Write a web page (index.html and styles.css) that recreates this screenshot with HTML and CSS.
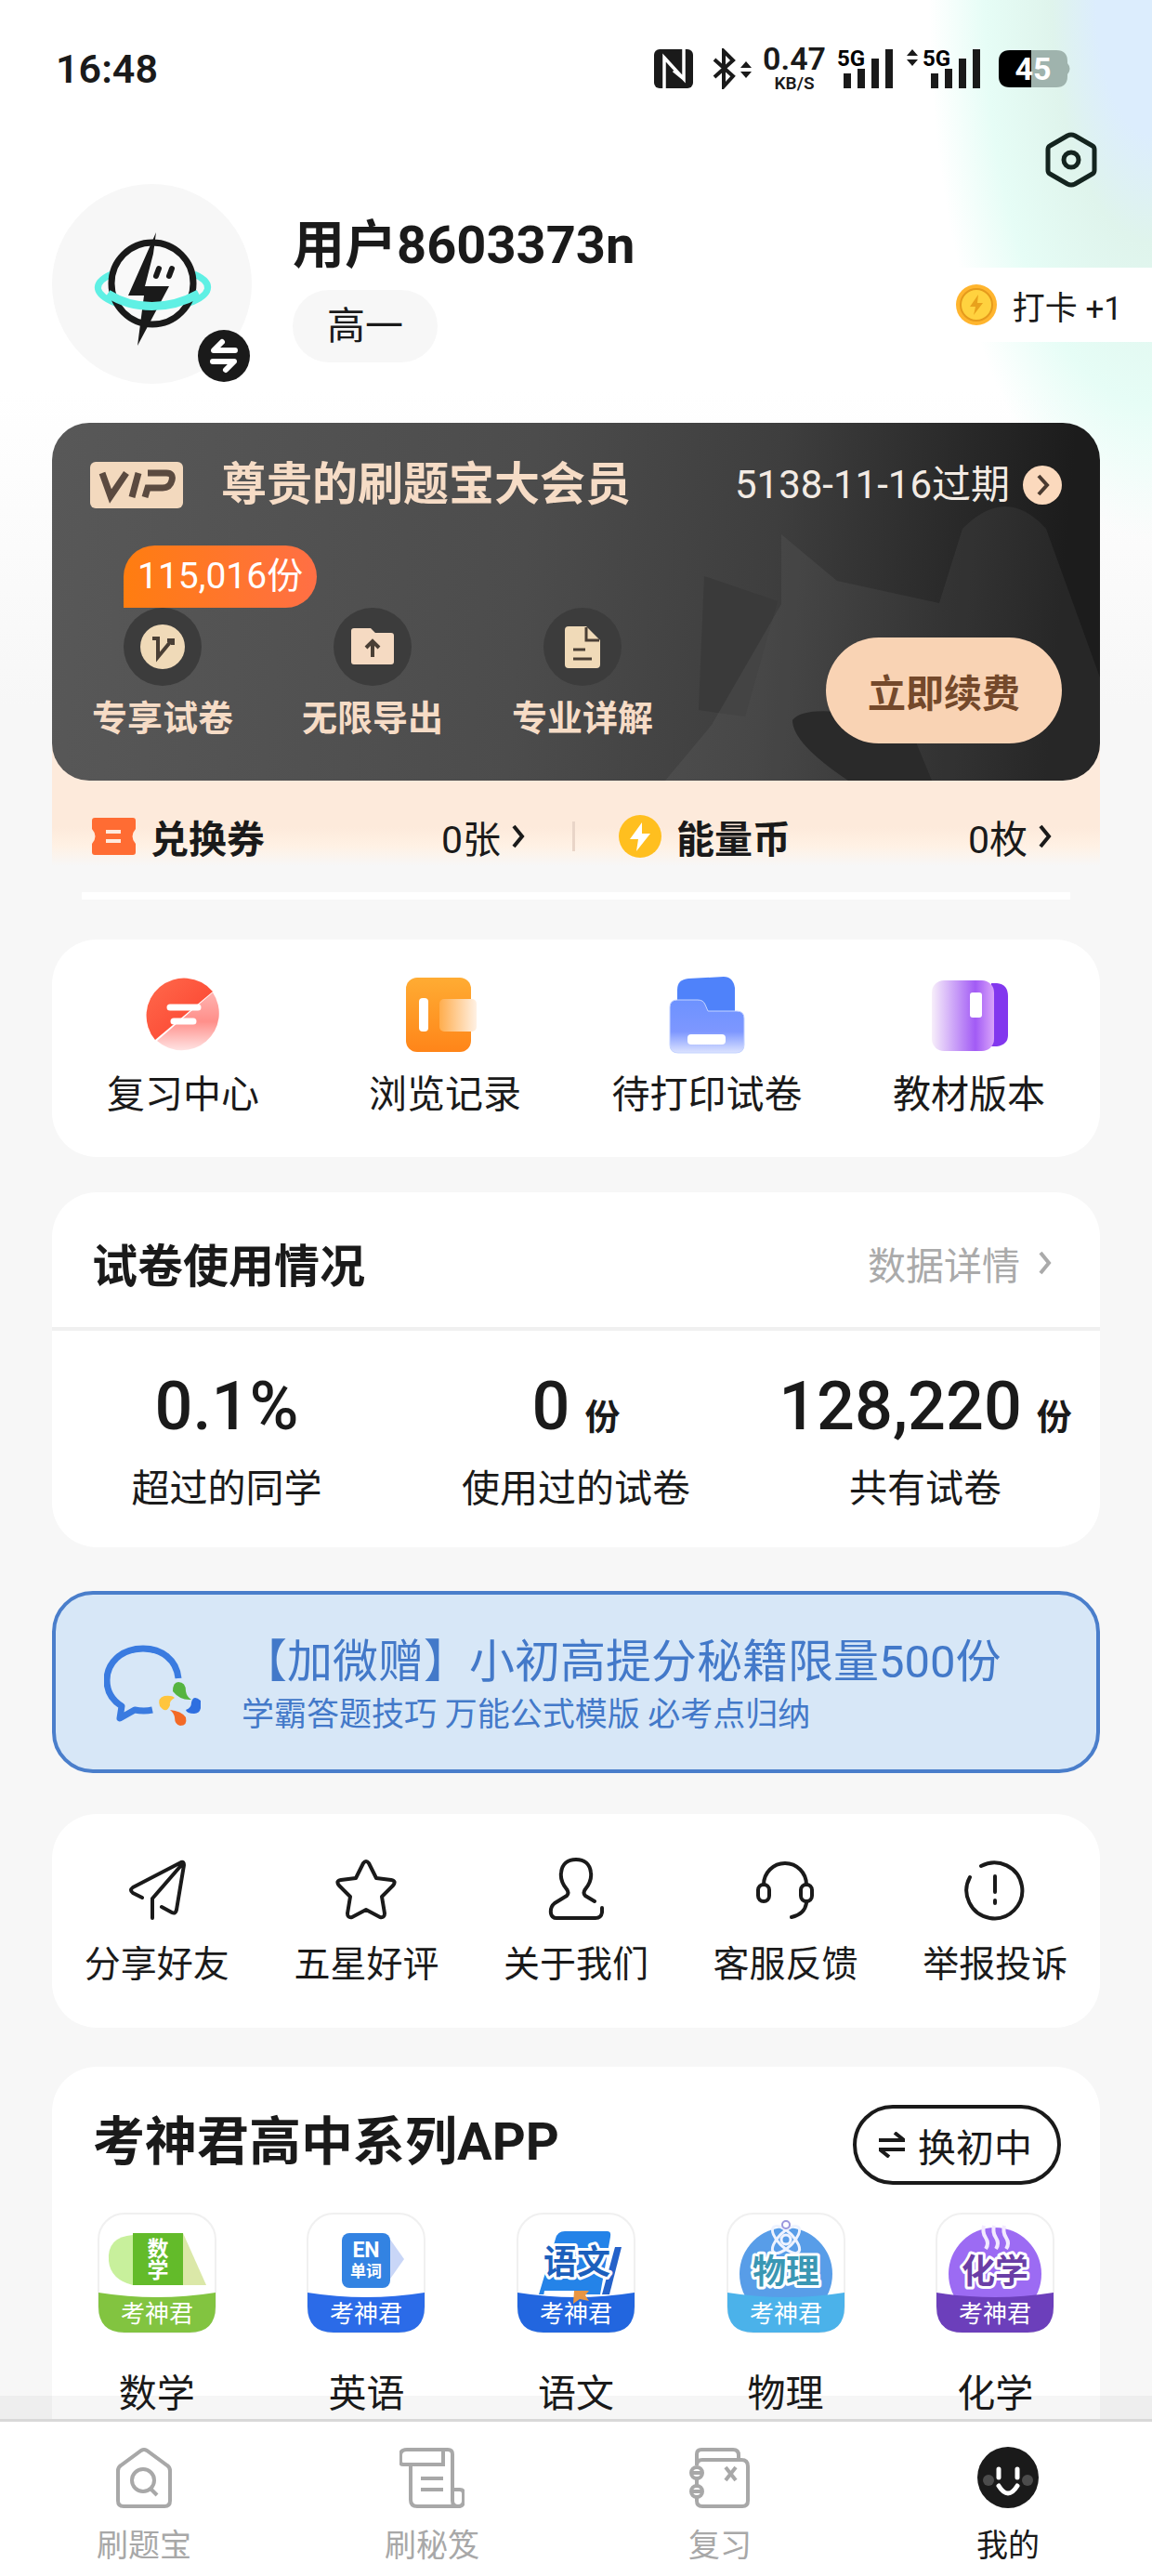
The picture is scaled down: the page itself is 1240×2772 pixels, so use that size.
FILE: index.html
```html
<!DOCTYPE html>
<html lang="zh-CN">
<head>
    <meta charset="UTF-8">
    <meta name="viewport" content="width=device-width, initial-scale=1.0">
    <title>我的</title>
    <link rel="stylesheet" href="styles.css">
</head>
<body>
    <div class="app">
        <main class="content">
            <div class="status-bar">
                <span class="time">16:48</span>
                <div class="status-icons">
                    <svg width="44" height="44" viewBox="0 0 44 44">
                        <rect x="1" y="1" width="42" height="42" rx="6" fill="#1a1a1a"/>
                        <path d="M12 43V10L33 33V1M12 10l10 11M33 33L22 24" fill="none" stroke="#fff" stroke-width="3.5"/>
                    </svg>
                    <svg class="bluetooth" width="42" height="44" viewBox="0 0 42 44">
                        <path d="M2 12l20 18-10 11V3l10 10L2 31" fill="none" stroke="#1a1a1a" stroke-width="4"/>
                        <path d="M30 21l6-7 6 7zM30 25l6 7 6-7z" fill="#1a1a1a"/>
                    </svg>
                    <div class="speed">
                        <span class="speed-value">0.47</span>
                        <span class="speed-unit">KB/S</span>
                    </div>
                    <svg class="signal" width="62" height="44" viewBox="0 0 62 44">
                        <text class="net" x="0" y="19">5G</text>
                        <path d="M7 27h8v16H7zM22 22h8v21h-8zM37 11h8v32h-8zM52 1h8v42h-8z" fill="#1a1a1a"/>
                    </svg>
                    <svg class="signal" width="82" height="44" viewBox="0 0 82 44">
                        <path d="M1 8l6-7 6 7zM1 12l6 7 6-7z" fill="#1a1a1a"/>
                        <text class="net" x="18" y="19">5G</text>
                        <path d="M27 27h8v16h-8zM42 22h8v21h-8zM57 11h8v32h-8zM72 1h8v42h-8z" fill="#1a1a1a"/>
                    </svg>
                    <svg class="battery" width="77" height="40" viewBox="0 0 77 40">
                        <path d="M35 0h27q12 0 12 12v2q5 6 0 12v2q0 12-12 12H35z" fill="#9fb3ad"/>
                        <path d="M35 0H12Q0 0 0 12v16q0 12 12 12h23z" fill="#000"/>
                        <text class="battery-text" x="37" y="32">45</text>
                    </svg>
                </div>
            </div>

            <header class="profile">
                <div class="avatar">
                    <svg width="215" height="215" viewBox="0 0 215 215">
                        <path d="M64 97c-22 10-18 22 4 31 26 9 54 9 80 0 22-8 28-21 5-31" fill="none" stroke="#5ff0e4" stroke-width="7"/>
                        <circle cx="108" cy="107" r="44" fill="#f9f9f9" stroke="#1a1a1a" stroke-width="7"/>
                        <path d="M112 52L82 120h17l-7 54 34-64h-26l9-35z" fill="#1a1a1a"/>
                        <path d="M115 91l-3 8M129 91l-3 8" stroke="#1a1a1a" stroke-width="6" stroke-linecap="round"/>
                        <path d="M60 118c28 18 66 18 98 0" fill="none" stroke="#5ff0e4" stroke-width="9"/>
                    </svg>
                    <button class="avatar-switch" type="button" aria-label="切换身份">
                        <svg width="56" height="56" viewBox="0 0 56 56">
                            <circle cx="28" cy="28" r="28" fill="#1a1a1a"/>
                            <path d="M40 22H17l9-9M16 34h23l-9 9" fill="none" stroke="#fff" stroke-width="6" stroke-linecap="round" stroke-linejoin="round"/>
                        </svg>
                    </button>
                </div>
                <div class="user">
                    <h1 class="user-name">用户8603373n</h1>
                    <span class="grade">高一</span>
                </div>
                <div class="profile-side">
                    <button class="settings" type="button" aria-label="设置">
                        <svg width="60" height="60" viewBox="0 0 60 60" fill="none" stroke="#14241f" stroke-width="5" stroke-linejoin="round">
                            <path d="M30 3q2 0 4 1l19 11q2 1 2 4v22q0 3-2 4L34 56q-4 2-8 0L7 45q-2-1-2-4V19q0-3 2-4L26 4q2-1 4-1z"/>
                            <circle cx="30" cy="30" r="8"/>
                        </svg>
                    </button>
                    <button class="checkin" type="button">
                        <svg width="46" height="46" viewBox="0 0 46 46">
                            <circle cx="23" cy="23" r="22" fill="#ffb52e"/>
                            <circle cx="23" cy="23" r="17" fill="#ffd23f" stroke="#e59a1c" stroke-width="2"/>
                            <path d="M25 12l-9 13h6l-2 9 10-13h-6z" fill="#e8a21d"/>
                        </svg>
                        打卡 +1
                    </button>
                </div>
            </header>

            <section class="vip">
                <!-- 背景暗纹 -->
                <svg class="vip-bg" viewBox="0 0 1128 385" preserveAspectRatio="xMaxYMid slice">
                    <path d="M702 165l79 27-35 124-50-7z" fill="#3a3a3a"/>
                    <path d="M785 120l60 50 110 24 25-80q47-48 90 0l58 160v111H660l50-60 75-130z" fill="#fff" fill-opacity=".05"/>
                    <path d="M797 320q10-14 60-8h60l30 73h-90q-60-40-60-65z" fill="#2a2a2a"/>
                </svg>
                <div class="vip-head">
                    <svg width="100" height="50" viewBox="0 0 100 50">
                        <rect width="100" height="50" rx="6" fill="#f3d9be"/>
                        <path d="M13 12l9 25 17-25M52 12l-7 26M62 12h20q8 0 6 8t-10 8H62l-3 10" fill="none" stroke="#5b4a40" stroke-width="7"/>
                    </svg>
                    <h2 class="vip-title">尊贵的刷题宝大会员</h2>
                    <a class="vip-date" href="#">
                        5138-11-16过期
                        <svg width="42" height="42" viewBox="0 0 42 42">
                            <circle cx="21" cy="21" r="21" fill="#fbd9bd"/>
                            <path d="M17 11l9 10-9 10" fill="none" stroke="#4a3a30" stroke-width="4"/>
                        </svg>
                    </a>
                </div>
                <div class="vip-body">
                    <ul class="benefits">
                        <li>
                            <span class="benefit-icon">
                                <svg width="48" height="48" viewBox="0 0 48 48">
                                    <circle cx="24" cy="24" r="24" fill="#f0dab8"/>
                                    <path d="M13 15h6v20l14-17M29 17h6v5" fill="none" stroke="#4a3f35" stroke-width="4"/>
                                </svg>
                                <span class="count">115,016份</span>
                            </span>
                            专享试卷
                        </li>
                        <li>
                            <span class="benefit-icon">
                                <svg width="48" height="48" viewBox="0 0 48 48">
                                    <path d="M4 4h18l5 5h17q3 0 3 3v28q0 3-3 3H4q-3 0-3-3V7q0-3 3-3z" fill="#f5dac2"/>
                                    <path d="M24 35V18M17 25l7-7 7 7" fill="none" stroke="#4a3f35" stroke-width="4"/>
                                </svg>
                            </span>
                            无限导出
                        </li>
                        <li>
                            <span class="benefit-icon">
                                <svg width="48" height="48" viewBox="0 0 48 48">
                                    <path d="M9 2h19l15 15v26q0 4-4 4H9q-4 0-4-4V6q0-4 4-4z" fill="#f0dab8"/>
                                    <path d="M28 3v14h14M14 27h13M14 37h20" fill="none" stroke="#4a3f35" stroke-width="3"/>
                                </svg>
                            </span>
                            专业详解
                        </li>
                    </ul>
                    <button class="renew" type="button">立即续费</button>
                </div>
            </section>

            <div class="assets">
                <a class="asset" href="#">
                    <svg width="47" height="40" viewBox="0 0 47 40">
                        <path d="M3 0h41q3 0 3 3v9q-7 8 0 16v9q0 3-3 3H3q-3 0-3-3v-9q7-8 0-16V3q0-3 3-3z" fill="#ff6c33"/>
                        <path d="M15 15h16M15 25h16" stroke="#ffe9dd" stroke-width="4"/>
                    </svg>
                    <strong>兑换券</strong>
                    <span class="amount">0张</span>
                    <svg class="arrow" width="14" height="26" viewBox="0 0 14 26"><path d="M2 2l9 11-9 11"/></svg>
                </a>
                <a class="asset" href="#">
                    <svg width="46" height="46" viewBox="0 0 46 46">
                        <circle cx="23" cy="23" r="23" fill="#ffbf1f"/>
                        <path d="M25 8L12 26h9l-2 13 15-19h-9z" fill="#fff"/>
                    </svg>
                    <strong>能量币</strong>
                    <span class="amount">0枚</span>
                    <svg class="arrow" width="14" height="26" viewBox="0 0 14 26"><path d="M2 2l9 11-9 11"/></svg>
                </a>
            </div>
            <div class="strip"></div>

            <nav class="card tools">
                <a href="#">
                    <svg width="84" height="84" viewBox="0 0 84 84">
                        <defs>
                            <linearGradient id="red" x1="0" y1="0" x2="1" y2="1"><stop offset="0" stop-color="#ff6a4c"/><stop offset="1" stop-color="#fb3f2d"/></linearGradient>
                            <linearGradient id="redFade" x1="0" y1="0" x2="0" y2="1"><stop offset="0" stop-color="#ffb3b0"/><stop offset=".5" stop-color="#ff8f8a"/><stop offset="1" stop-color="#ffe3e3"/></linearGradient>
                        </defs>
                        <path d="M74 18a40 40 0 0 1-60 52z" fill="url(#redFade)"/>
                        <path d="M12 69A40 40 0 0 1 74 17z" fill="url(#red)"/>
                        <path d="M28 34h30M32 49h21" stroke="#fff" stroke-width="7" stroke-linecap="round"/>
                    </svg>
                    复习中心
                </a>
                <a href="#">
                    <svg width="84" height="84" viewBox="0 0 84 84">
                        <defs>
                            <linearGradient id="orange" x1="0" y1="0" x2="0" y2="1"><stop offset="0" stop-color="#ffac33"/><stop offset="1" stop-color="#ff8519"/></linearGradient>
                            <linearGradient id="orangeFade"><stop offset="0" stop-color="#ffad4d"/><stop offset="1" stop-color="#fff1e4"/></linearGradient>
                        </defs>
                        <rect x="0" y="2" width="70" height="80" rx="12" fill="url(#orange)"/>
                        <rect x="36" y="25" width="40" height="35" rx="5" fill="url(#orangeFade)"/>
                        <rect x="14" y="24" width="10" height="36" rx="4" fill="#fff"/>
                    </svg>
                    浏览记录
                </a>
                <a href="#">
                    <svg width="84" height="84" viewBox="0 0 84 84">
                        <defs>
                            <linearGradient id="blueFade" x1="0" y1="0" x2="0" y2="1"><stop offset="0" stop-color="#6d92ff"/><stop offset=".6" stop-color="#7d97ff"/><stop offset="1" stop-color="#dce3ff"/></linearGradient>
                        </defs>
                        <path d="M22 3l38-2q10 0 12 12v40H10V15Q10 4 22 3z" fill="#4f82fa"/>
                        <path d="M10 26h22q6 0 8 5l3 7h31q8 0 8 8v28q0 9-9 9H11q-9 0-9-9V34q0-8 8-8z" fill="url(#blueFade)" stroke="#c4d3ff"/>
                        <rect x="21" y="63" width="41" height="11" rx="4" fill="#fff"/>
                    </svg>
                    待打印试卷
                </a>
                <a href="#">
                    <svg width="84" height="84" viewBox="0 0 84 84">
                        <defs>
                            <linearGradient id="purpleFade"><stop offset="0" stop-color="#f7eefa"/><stop offset=".7" stop-color="#a25bf5"/><stop offset="1" stop-color="#d9a4fa"/></linearGradient>
                        </defs>
                        <path d="M66 8h6q12 1 12 14v42q0 10-12 12h-6z" fill="#8237ee"/>
                        <rect x="2" y="5" width="67" height="76" rx="13" fill="url(#purpleFade)"/>
                        <rect x="43" y="18" width="13" height="27" rx="3" fill="#fff"/>
                    </svg>
                    教材版本
                </a>
            </nav>

            <section class="card usage">
                <div class="usage-head">
                    <h2>试卷使用情况</h2>
                    <a href="#">
                        数据详情
                        <svg class="arrow" width="14" height="26" viewBox="0 0 14 26"><path d="M2 2l9 11-9 11"/></svg>
                    </a>
                </div>
                <div class="stats">
                    <div class="stat">
                        <p class="stat-value">0.1%</p>
                        <p class="stat-label">超过的同学</p>
                    </div>
                    <div class="stat">
                        <p class="stat-value">0<small>份</small></p>
                        <p class="stat-label">使用过的试卷</p>
                    </div>
                    <div class="stat">
                        <p class="stat-value">128,220<small>份</small></p>
                        <p class="stat-label">共有试卷</p>
                    </div>
                </div>
            </section>

            <a class="banner" href="#">
                <svg width="104" height="88" viewBox="0 0 104 88">
                    <path d="M80 36C78 16 62 4 42 4 18 4 3 20 3 38q0 18 16 28l-2 13 16-9q10 2 19 0" fill="none" stroke="#3a7be0" stroke-width="7" stroke-linejoin="round"/>
                    <path d="M74 50q0-10 6-10 8 0 8 10 1 6 6 9-12 1-20-9z" fill="#55b440"/>
                    <path d="M104 60q2 14-7 14-8 0-9-4 6-2 6-8 2-9 10-2z" fill="#2f6fe0"/>
                    <path d="M88 78q2 9-6 9-6-1-6-9-1-5-5-8 12 1 17 8z" fill="#f36a26"/>
                    <path d="M60 66q-3-9 5-11 8-1 11 2-6 3-5 8-4 10-11 1z" fill="#ffc53d"/>
                </svg>
                <span class="banner-text">
                    <span class="banner-title">【加微赠】小初高提分秘籍限量500份</span>
                    <span class="banner-sub">学霸答题技巧 万能公式模版 必考点归纳</span>
                </span>
            </a>

            <nav class="card links">
                <a href="#">
                    <svg class="line-icon" width="66" height="66" viewBox="0 0 66 66">
                        <path d="M17 42L7 37q-4-3 0-6L59 4q3-1 3 3L54 55q-1 5-5 3l-11-6M61 5L28 43v21"/>
                    </svg>
                    分享好友
                </a>
                <a href="#">
                    <svg class="line-icon" width="66" height="66" viewBox="0 0 66 66">
                        <path d="M30 5q3-4 6 0l8 16 16 2q6 1 2 6L50 41l3 18q0 5-5 4L33 55l-15 8q-5 1-5-4l3-18L4 29q-4-5 2-6l16-2z"/>
                    </svg>
                    五星好评
                </a>
                <a href="#">
                    <svg class="line-icon" width="66" height="66" viewBox="0 0 66 66">
                        <path d="M53 46l-10-6q-3-3 0-7c4-5 7-11 6-18C48 6 42 1 33 1S18 6 17 15c-1 7 2 13 6 18q3 4 0 7L10 48q-5 4-4 11 1 5 6 5h42q6 0 7-6V53"/>
                    </svg>
                    关于我们
                </a>
                <a href="#">
                    <svg class="line-icon" width="66" height="66" viewBox="0 0 66 66">
                        <path d="M9 28a23 23 0 0 1 46 0v20q-2 12-16 15"/>
                        <rect x="3" y="28" width="12" height="18" rx="6" fill="#fff"/>
                        <rect x="49" y="28" width="12" height="18" rx="6" fill="#fff"/>
                    </svg>
                    客服反馈
                </a>
                <a href="#">
                    <svg class="line-icon" width="66" height="66" viewBox="0 0 66 66">
                        <path d="M18 8a30 30 0 1 1-12 12M33 19v17M33 45v3"/>
                    </svg>
                    举报投诉
                </a>
            </nav>

            <section class="card series">
                <div class="series-head">
                    <h2>考神君高中系列APP</h2>
                    <button class="switch" type="button">
                        <svg width="28" height="28" viewBox="0 0 28 28" fill="none" stroke="#1a1a1a" stroke-width="4">
                            <path d="M0 9h27L17 1M28 19H1l10 8"/>
                        </svg>
                        换初中
                    </button>
                </div>
                <div class="app-list">
                    <a href="#">
                        <svg width="128" height="130" viewBox="0 0 128 130">
                            <rect class="tile" x="1" y="1" width="126" height="128" rx="28"/>
                            <path d="M38 24q-28 2-26 28 2 20 26 26z" fill="#c8f09c"/>
                            <path d="M92 22l25 56H92z" fill="#dbe8a8"/>
                            <path d="M38 22h54v56H38z" fill="#63bb2a"/>
                            <path class="band" d="M1 86q63 10 126 0v15q0 28-28 28H29Q1 129 1 101z" fill="#82c440"/>
                            <text class="glyph small" x="65" y="47">数</text>
                            <text class="glyph small" x="65" y="70">学</text>
                            <text class="brand" x="64" y="118">考神君</text>
                        </svg>
                        数学
                    </a>
                    <a href="#">
                        <svg width="128" height="130" viewBox="0 0 128 130">
                            <rect class="tile" x="1" y="1" width="126" height="128" rx="28"/>
                            <path d="M88 26l17 24-17 24z" fill="#c9d6f7"/>
                            <rect x="38" y="22" width="52" height="59" rx="8" fill="#3383e2"/>
                            <path class="band" d="M1 86q63 10 126 0v15q0 28-28 28H29Q1 129 1 101z" fill="#2b6be8"/>
                            <text class="glyph small" x="64" y="48">EN</text>
                            <text class="glyph tiny" x="64" y="69">单词</text>
                            <text class="brand" x="64" y="118">考神君</text>
                        </svg>
                        英语
                    </a>
                    <a href="#">
                        <svg width="128" height="130" viewBox="0 0 128 130">
                            <rect class="tile" x="1" y="1" width="126" height="128" rx="28"/>
                            <path d="M52 20h46q4 0 3 6L90 88H24l18-60q2-8 10-8z" fill="#2483e8"/>
                            <path d="M106 37h7L100 88h-8z" fill="#2461c9"/>
                            <path d="M30 84h40l-4 6H29z" fill="#fff"/>
                            <path class="band" d="M1 86q63 10 126 0v15q0 28-28 28H29Q1 129 1 101z" fill="#2266df"/>
                            <path d="M62 84h16l-4 5 4 6-10-2-7 5z" fill="#e89543"/>
                            <text class="glyph outline" x="65" y="66" fill="#1c5fbc">语文</text>
                            <text class="brand" x="64" y="118">考神君</text>
                        </svg>
                        语文
                    </a>
                    <a href="#">
                        <svg width="128" height="130" viewBox="0 0 128 130">
                            <rect class="tile" x="1" y="1" width="126" height="128" rx="28"/>
                            <circle cx="64" cy="66" r="50" fill="#589de8"/>
                            <path class="band" d="M1 86q63 10 126 0v15q0 28-28 28H29Q1 129 1 101z" fill="#4bb2ea"/>
                            <g fill="none" stroke="#eef3ff" stroke-width="3">
                                <ellipse cx="64" cy="29" rx="19" ry="8" transform="rotate(45 64 29)"/>
                                <ellipse cx="64" cy="29" rx="19" ry="8" transform="rotate(-45 64 29)"/>
                                <circle cx="64" cy="29" r="5"/>
                            </g>
                            <circle cx="64" cy="13" r="4" fill="none" stroke="#9b97dd" stroke-width="2"/>
                            <text class="glyph outline" x="64" y="76" fill="#3a97b4">物理</text>
                            <text class="brand" x="64" y="118">考神君</text>
                        </svg>
                        物理
                    </a>
                    <a href="#">
                        <svg width="128" height="130" viewBox="0 0 128 130">
                            <rect class="tile" x="1" y="1" width="126" height="128" rx="28"/>
                            <circle cx="64" cy="66" r="50" fill="#9c6bf3"/>
                            <path class="band" d="M1 86q63 10 126 0v15q0 28-28 28H29Q1 129 1 101z" fill="#6c3fbb"/>
                            <path d="M52 14q-2 7 2 13t0 12M63 14q-2 7 2 13t0 12M74 14q-2 7 2 13t0 12" fill="none" stroke="#f3eaff" stroke-width="4"/>
                            <text class="glyph outline" x="64" y="76" fill="#6a3ea6">化学</text>
                            <text class="brand" x="64" y="118">考神君</text>
                        </svg>
                        化学
                    </a>
                </div>
            </section>
        </main>

        <nav class="tab-bar">
            <a href="#">
                <svg width="66" height="66" viewBox="0 0 66 66">
                    <path d="M30 4q3-2 6 0l22 16q3 2 3 6v32q0 6-6 6H11q-6 0-6-6V26q0-4 3-6z"/>
                    <circle cx="32" cy="36" r="12"/>
                    <path d="M40 45l7 7"/>
                </svg>
                刷题宝
            </a>
            <a href="#">
                <svg width="70" height="66" viewBox="0 0 70 66">
                    <path d="M8 3h44q5 0 5 5v50q0 6 6 6h-44q-7 0-7-7V19H4q-3 0-3-3V9q0-6 7-6zM47 3v16H12M57 46h8q4 0 4 4v8q0 6-6 6M23 34h24M23 46h24"/>
                </svg>
                刷秘笈
            </a>
            <a href="#">
                <svg width="70" height="66" viewBox="0 0 70 66">
                    <path d="M10 20V8q0-5 5-5h34q6 0 6 6v5M10 20q0-6 6-6h42q7 0 7 7v37q0 6-6 6H16q-6 0-6-6V54M10 34v8M41 22l11 14M52 22L41 36"/>
                    <circle cx="10" cy="28" r="6"/>
                    <circle cx="10" cy="48" r="6"/>
                    <path d="M4 28h12M4 48h12"/>
                </svg>
                复习
            </a>
            <a class="active" href="#">
                <svg class="face" width="66" height="66" viewBox="0 0 66 66">
                    <circle cx="33" cy="33" r="33" fill="#1a1a1a"/>
                    <circle cx="12" cy="36" r="6" fill="#4c4c4c"/>
                    <circle cx="54" cy="36" r="6" fill="#4c4c4c"/>
                    <path d="M23 24v9M43 24v9M23 42q10 16 20 0" fill="none" stroke="#fff" stroke-width="5" stroke-linecap="round"/>
                </svg>
                我的
            </a>
        </nav>
    </div>
</body>
</html>
```

FILE: styles.css
```css
* {
    box-sizing: border-box;
}
body {
    margin: 0;
    font-family: Roboto, "Noto Sans CJK SC", sans-serif;
    color: #1a1a1a;
    background: #f7f7f7;
}
h1, h2, p, ul {
    margin: 0;
    padding: 0;
}
ul {
    list-style: none;
}
a {
    color: inherit;
    text-decoration: none;
}
button {
    border: none;
    padding: 0;
    background: none;
    font-family: inherit;
    color: inherit;
    cursor: pointer;
}
svg {
    display: block;
    flex: none;
}
.app {
    display: flex;
    flex-direction: column;
    height: 100vh;
}
.content {
    flex: 1;
    min-height: 0;
    overflow: hidden;
    background:
        radial-gradient(ellipse 240px 580px at 100% 0, #dcedfd 0, #dcedfd 25%, #dff4ec 45%, #e6fdf6 75%, rgba(247, 247, 247, 0) 100%) no-repeat,
        linear-gradient(#fff 420px, #f7f7f7 760px);
}

/* 状态栏 */
.status-bar {
    display: flex;
    align-items: center;
    justify-content: space-between;
    height: 60px;
    margin-top: 44px;
    padding: 0 88px 0 60px;
}
.time {
    font-size: 43px;
    font-weight: 600;
}
.status-icons {
    display: flex;
    align-items: center;
    gap: 12px;
}
.bluetooth {
    margin-left: 8px;
}
.speed {
    display: flex;
    flex-direction: column;
    align-items: center;
    gap: 2px;
    font-weight: 600;
}
.speed-value {
    font-size: 34px;
    line-height: 30px;
}
.speed-unit {
    font-size: 19px;
    line-height: 20px;
}
.signal {
    overflow: visible;
}
.net {
    font-size: 24px;
    font-weight: 700;
}
.battery {
    margin-left: 6px;
}
.battery-text {
    font-size: 34px;
    font-weight: 700;
    fill: #fff;
    text-anchor: middle;
}

/* 用户信息 */
.profile {
    display: flex;
    align-items: flex-start;
    padding: 38px 0 42px 56px;
}
.avatar {
    position: relative;
    margin: 56px 44px 0 0;
    border-radius: 50%;
    background: #f7f7f7;
}
.avatar-switch {
    position: absolute;
    right: 2px;
    bottom: 2px;
}
.user {
    display: flex;
    flex-direction: column;
    align-items: flex-start;
    gap: 15px;
    padding-top: 89px;
}
.user-name {
    font-size: 56px;
    line-height: 66px;
    font-weight: 700;
}
.grade {
    padding: 0 37px;
    border-radius: 39px;
    background: #f7f7f7;
    font-size: 41px;
    line-height: 78px;
}
.profile-side {
    display: flex;
    flex-direction: column;
    align-items: flex-end;
    gap: 86px;
    margin-left: auto;
}
.settings {
    margin-right: 57px;
}
.checkin {
    display: flex;
    align-items: center;
    gap: 16px;
    height: 80px;
    padding: 0 32px;
    border-radius: 40px 0 0 40px;
    background: #fff;
    font-size: 35px;
}

/* 会员卡 */
.vip {
    position: relative;
    z-index: 1;
    margin: 0 56px;
    padding: 37px 41px 40px;
    border-radius: 40px;
    overflow: hidden;
    background: linear-gradient(95deg, #585858 0, #4c4c4c 45%, #3e3e3e 68%, #1c1c1c 95%);
    color: #f6dcc6;
}
.vip-bg {
    position: absolute;
    top: 0;
    left: 0;
    width: 100%;
    height: 100%;
}
.vip-head {
    position: relative;
    display: flex;
    align-items: center;
    height: 60px;
    line-height: 56px;
}
.vip-title {
    margin-left: 41px;
    font-size: 49px;
    font-weight: 700;
}
.vip-date {
    display: flex;
    align-items: center;
    gap: 14px;
    margin-left: auto;
    font-size: 42px;
    color: #f3ebe4;
}
.vip-body {
    position: relative;
    display: flex;
    justify-content: space-between;
    align-items: flex-end;
    margin-top: 102px;
}
.benefits {
    display: flex;
    gap: 70px;
}
.benefits li {
    display: flex;
    flex-direction: column;
    align-items: center;
    gap: 8px;
    width: 156px;
    font-size: 38px;
    line-height: 54px;
    font-weight: 700;
    white-space: nowrap;
}
.benefit-icon {
    position: relative;
    display: flex;
    align-items: center;
    justify-content: center;
    width: 84px;
    height: 84px;
    border-radius: 50%;
    background: #3c3c3c;
}
.count {
    position: absolute;
    left: 0;
    bottom: 100%;
    padding: 0 15px;
    border-radius: 34px 34px 34px 0;
    background: linear-gradient(90deg, #ff7d10, #ff6f45);
    color: #fff;
    font-size: 39px;
    line-height: 67px;
    font-weight: 400;
}
.renew {
    height: 114px;
    padding: 0 45px;
    border-radius: 57px;
    background: #f9d3b4;
    color: #74492b;
    font-size: 41px;
    font-weight: 700;
}

/* 兑换券、能量币 */
.assets {
    display: flex;
    gap: 101px;
    margin: -40px 56px 0;
    padding: 70px 52px 2px 43px;
    background: linear-gradient(#fdeadb 90px, #fff1e4 110px, #f7f7f7 100%);
}
.asset {
    position: relative;
    flex: 1;
    display: flex;
    align-items: center;
    height: 60px;
    font-size: 41px;
}
.asset + .asset::before {
    content: "";
    position: absolute;
    left: -50px;
    width: 3px;
    height: 32px;
    background: #e9d5c8;
}
.asset strong {
    margin-left: 16px;
}
.asset .amount {
    margin-left: auto;
    margin-right: 12px;
}
.arrow {
    fill: none;
    stroke: currentColor;
    stroke-width: 4;
}
.strip {
    height: 8px;
    margin: 28px 88px 0;
    background: #fff;
}

.card {
    margin: 0 56px;
    border-radius: 48px;
    background: #fff;
}
.card h2 {
    font-size: 49px;
    font-weight: 700;
}

/* 常用工具 */
.tools {
    display: flex;
    margin-top: 43px;
    padding: 39px 0 43px;
}
.tools a {
    flex: 1;
    display: flex;
    flex-direction: column;
    align-items: center;
    gap: 20px;
    font-size: 41px;
    line-height: 48px;
}

/* 试卷使用情况 */
.usage {
    margin-top: 38px;
}
.usage-head {
    display: flex;
    align-items: center;
    justify-content: space-between;
    height: 149px;
    padding: 6px 52px 0 43px;
    border-bottom: 4px solid #f0f0f0;
}
.usage-head a {
    display: flex;
    align-items: center;
    gap: 20px;
    font-size: 41px;
    color: #aaa;
}
.stats {
    display: flex;
    padding: 40px 0 39px;
}
.stat {
    flex: 1;
    text-align: center;
}
.stat-value {
    display: flex;
    align-items: baseline;
    justify-content: center;
    gap: 16px;
    height: 84px;
    font-size: 72px;
    line-height: 84px;
    font-weight: 500;
}
.stat-value small {
    font-size: 38px;
    line-height: 48px;
    font-weight: 700;
}
.stat-label {
    margin-top: 22px;
    font-size: 41px;
    line-height: 48px;
}

/* 加微横幅 */
.banner {
    display: flex;
    align-items: center;
    gap: 44px;
    height: 196px;
    margin: 47px 56px 0;
    padding: 8px 52px 0;
    border: 4px solid #4a7ecb;
    border-radius: 44px;
    background: #d7e7f7;
    color: #4379c9;
}
.banner-text {
    display: flex;
    flex-direction: column;
    gap: 3px;
    white-space: nowrap;
}
.banner-title {
    font-size: 49px;
    line-height: 60px;
}
.banner-sub {
    font-size: 35px;
    line-height: 48px;
}

/* 分享、客服等入口 */
.links {
    display: flex;
    margin-top: 44px;
    padding: 48px 0 45px;
}
.links a {
    flex: 1;
    display: flex;
    flex-direction: column;
    align-items: center;
    gap: 25px;
    font-size: 39px;
    line-height: 46px;
}
.line-icon {
    fill: none;
    stroke: #1a1a1a;
    stroke-width: 4;
    stroke-linecap: round;
    stroke-linejoin: round;
    overflow: visible;
}

/* 系列 APP */
.series {
    margin-top: 42px;
    padding: 41px 0 60px;
}
.series-head {
    display: flex;
    align-items: center;
    justify-content: space-between;
    padding: 0 42px 0 44px;
}
.series-head h2 {
    font-size: 56px;
    line-height: 72px;
    padding-bottom: 6px;
}
.switch {
    display: flex;
    align-items: center;
    gap: 14px;
    height: 86px;
    padding: 0 27px 0 24px;
    border: 4px solid #1a1a1a;
    border-radius: 43px;
    font-size: 41px;
}
.app-list {
    display: flex;
    margin-top: 30px;
}
.app-list a {
    flex: 1;
    display: flex;
    flex-direction: column;
    align-items: center;
    gap: 40px;
    font-size: 41px;
    line-height: 50px;
}
.tile {
    fill: #fff;
    stroke: #f0f0f0;
    stroke-width: 2;
}
.glyph, .brand {
    text-anchor: middle;
}
.glyph {
    font-size: 36px;
    font-weight: 700;
}
.small {
    font-size: 23px;
    fill: #fff;
}
.tiny {
    font-size: 17px;
    fill: #fff;
}
.outline {
    stroke: #fff;
    stroke-width: 6;
    paint-order: stroke;
    stroke-linejoin: round;
}
.brand {
    font-size: 26px;
    fill: #fff;
}

/* 底部导航 */
.tab-bar {
    position: relative;
    display: flex;
    padding: 27px 0 11px;
    border-top: 3px solid #d8d8d8;
    background: #fff;
    box-shadow: 0 -25px 0 rgba(0, 0, 0, 0.035);
}
.tab-bar a {
    flex: 1;
    display: flex;
    flex-direction: column;
    align-items: center;
    gap: 18px;
    font-size: 34px;
    line-height: 44px;
    color: #a8a8a8;
}
.tab-bar svg {
    fill: none;
    stroke: #a8a8a8;
    stroke-width: 4;
}
.tab-bar .face {
    stroke: none;
}
.tab-bar .active {
    color: #1a1a1a;
}
```
